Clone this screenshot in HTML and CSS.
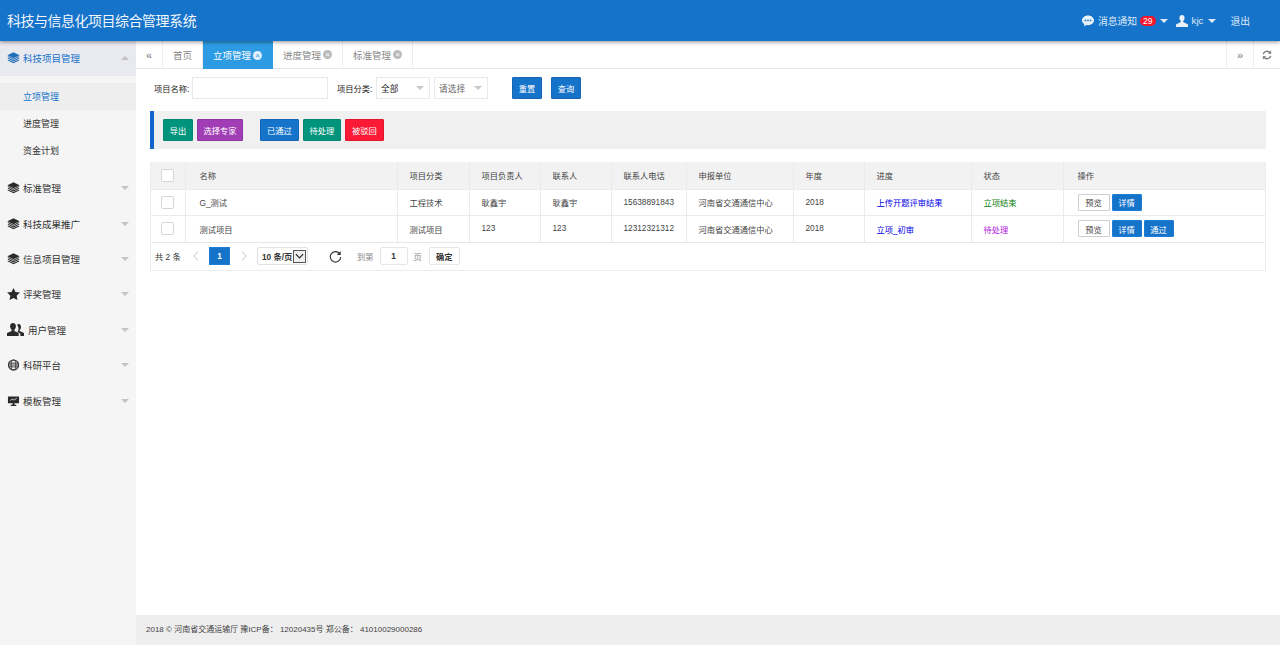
FILE: index.html
```html
<!DOCTYPE html>
<html lang="zh">
<head>
<meta charset="utf-8">
<title>科技与信息化项目综合管理系统</title>
<link rel="stylesheet" href="styles.css">
</head>
<body>
<svg class="defs" width="0" height="0" aria-hidden="true">
  <symbol id="layers" viewBox="0 0 16 14">
    <path fill="currentColor" d="M8 0l7.5 3.6L8 7.2.5 3.6z"/>
    <path fill="currentColor" d="M.5 5.600L2 4.900l6 2.900 6-2.900 1.500.7L8 9.200z"/>
    <path fill="currentColor" d="M.5 7.600L2 6.900l6 2.900 6-2.900 1.500.7L8 11.200z"/>
    <path fill="currentColor" d="M.5 9.800L2 9.100l6 2.900 6-2.900 1.500.7L8 13.400z"/>
  </symbol>
</svg>
<header class="topbar">
  <div class="brand">科技与信息化项目综合管理系统</div>
  <nav class="topnav">
    <span class="topitem">
      <svg class="ti-icon" viewBox="0 0 14 13"><path fill="#fff" fill-opacity=".9" d="M7 0c3.900 0 7 2.500 7 5.700s-3.100 5.700-7 5.700c-.7 0-1.300-.1-1.900-.2L2.200 13l.5-2.800C1 9.200 0 7.600 0 5.700 0 2.500 3.100 0 7 0z"/><circle cx="4" cy="5.800" r="1" fill="#1673ca"/><circle cx="7" cy="5.800" r="1" fill="#1673ca"/><circle cx="10" cy="5.800" r="1" fill="#1673ca"/></svg>
      消息通知<span class="badge">29</span><i class="caret"></i>
    </span>
    <span class="topitem user">
      <svg class="ti-icon" viewBox="0 0 13 13"><path fill="#fff" fill-opacity=".9" d="M6.500 0C8.300 0 9.300 1.300 9.300 3.200c0 1.500-.7 2.700-1.500 3.400v1.100L13 10.200V13H0v-2.800l5.200-2.500V6.600C4.400 5.900 3.700 4.700 3.700 3.200 3.700 1.300 4.700 0 6.500 0z"/></svg>
      kjc<i class="caret"></i>
    </span>
    <span class="topitem logout">退出</span>
  </nav>
</header>
<div class="shell">
  <aside class="sidebar">
    <div class="group open">
      <svg class="mi"><use href="#layers"/></svg><span class="mt">科技项目管理</span><i class="arrow up"></i>
    </div>
    <ul class="submenu">
      <li class="active">立项管理</li>
      <li>进度管理</li>
      <li>资金计划</li>
    </ul>
    <div class="group"><svg class="mi"><use href="#layers"/></svg><span class="mt">标准管理</span><i class="arrow"></i></div>
    <div class="group"><svg class="mi"><use href="#layers"/></svg><span class="mt">科技成果推广</span><i class="arrow"></i></div>
    <div class="group"><svg class="mi"><use href="#layers"/></svg><span class="mt">信息项目管理</span><i class="arrow"></i></div>
    <div class="group"><svg class="mi" viewBox="0 0 14 13"><path fill="currentColor" d="M7 0l2.100 4.300 4.800.7-3.500 3.300.9 4.700L7 10.800 2.700 13l.9-4.700L.1 5l4.800-.7z"/></svg><span class="mt">评奖管理</span><i class="arrow"></i></div>
    <div class="group"><svg class="mi wide" viewBox="0 0 17 13"><path fill="currentColor" d="M11.500 1c1.600 0 2.500 1.200 2.500 2.900 0 1.300-.6 2.400-1.300 3v1l4.300 2V13h-3.700v-2.500l-2.900-1.600c.6-.7 1.100-1.500 1.100-2.900 0-1.600-.4-3.100-1.500-4C10.500 1.400 11 1 11.500 1z"/><path fill="currentColor" d="M6 0c1.900 0 2.900 1.400 2.900 3.300 0 1.500-.7 2.800-1.500 3.500v1.100l4.300 2.200V13H0v-2.900l4.600-2.200V6.800C3.800 6.100 3.100 4.800 3.100 3.300 3.100 1.400 4.100 0 6 0z"/></svg><span class="mt">用户管理</span><i class="arrow"></i></div>
    <div class="group"><svg class="mi" viewBox="0 0 14 14"><circle cx="7" cy="7" r="5.900" fill="none" stroke="currentColor" stroke-width="1.300"/><ellipse cx="7" cy="7" rx="2.800" ry="5.900" fill="none" stroke="currentColor"/><path stroke="currentColor" d="M1.500 4.800h11M1.100 7h11.800M1.500 9.200h11"/></svg><span class="mt">科研平台</span><i class="arrow"></i></div>
    <div class="group"><svg class="mi" viewBox="0 0 14 13"><path fill="currentColor" d="M1 1.500h12v7.500H8v1.500h2V12H4v-1.500h2V9H1z"/><path fill="none" stroke="#f5f5f5" stroke-width=".8" d="M3.500 6l2-1.500 2 1 3-2"/></svg><span class="mt">模板管理</span><i class="arrow"></i></div>
  </aside>
  <main class="main">
    <div class="tabs">
      <span class="tab-btn">«</span>
      <div class="tablist">
        <span class="tab home">首页</span>
        <span class="tab current">立项管理<i class="close">×</i></span>
        <span class="tab">进度管理<i class="close">×</i></span>
        <span class="tab">标准管理<i class="close">×</i></span>
      </div>
      <span class="tab-btn left-line">»</span>
      <span class="tab-btn left-line refresh">
        <svg viewBox="0 0 12 12" width="10" height="10"><path fill="none" stroke="#777" stroke-width="1.600" d="M1.500 5a4.600 4.600 0 0 1 8.200-1.500M10.500 7a4.600 4.600 0 0 1-8.200 1.500"/><path fill="#777" d="M11 .6v4H7zM1 11.400v-4h4z"/></svg>
      </span>
    </div>
    <div class="content">
      <form class="search">
        <label class="lab">项目名称:</label>
        <span class="input name"></span>
        <label class="lab cat">项目分类:</label>
        <span class="select first">全部<i class="arrow"></i></span>
        <span class="select second">请选择<i class="arrow"></i></span>
        <button class="btn blue reset" type="button">重置</button>
        <button class="btn blue query" type="button">查询</button>
      </form>
      <div class="toolbar">
        <button class="btn teal" type="button">导出</button>
        <button class="btn purple" type="button">选择专家</button>
        <button class="btn blue spaced" type="button">已通过</button>
        <button class="btn teal" type="button">待处理</button>
        <button class="btn red" type="button">被驳回</button>
      </div>
      <div class="tablebox">
        <table class="grid">
          <colgroup>
            <col class="c0"><col class="c1"><col class="c2"><col class="c3"><col class="c4"><col class="c5"><col class="c6"><col class="c7"><col class="c8"><col class="c9"><col class="c10">
          </colgroup>
          <thead>
            <tr><th><i class="check"></i></th><th>名称</th><th>项目分类</th><th>项目负责人</th><th>联系人</th><th>联系人电话</th><th>申报单位</th><th>年度</th><th>进度</th><th>状态</th><th>操作</th></tr>
          </thead>
          <tbody>
            <tr><td><i class="check"></i></td><td>G_测试</td><td>工程技术</td><td>耿鑫宇</td><td>耿鑫宇</td><td>15638891843</td><td>河南省交通通信中心</td><td>2018</td><td class="prog">上传开题评审结果</td><td class="st-green">立项结束</td><td class="ops"><button class="mini ghost" type="button">预览</button><button class="mini fill" type="button">详情</button></td></tr>
            <tr><td><i class="check"></i></td><td>测试项目</td><td>测试项目</td><td>123</td><td>123</td><td>12312321312</td><td>河南省交通通信中心</td><td>2018</td><td class="prog">立项_初审</td><td class="st-purple">待处理</td><td class="ops"><button class="mini ghost" type="button">预览</button><button class="mini fill" type="button">详情</button><button class="mini fill" type="button">通过</button></td></tr>
          </tbody>
        </table>
        <div class="pager">
          <span class="total">共 2 条</span>
          <svg class="pg-arrow" viewBox="0 0 6 10"><path fill="none" stroke="#c8c8c8" d="M5 .5L.8 5 5 9.500"/></svg>
          <span class="pg-cur">1</span>
          <svg class="pg-arrow" viewBox="0 0 6 10"><path fill="none" stroke="#c8c8c8" d="M1 .5L5.200 5 1 9.500"/></svg>
          <span class="pg-size">10 条/页<i class="pg-drop"><svg viewBox="0 0 10 6" width="9" height="6"><path fill="none" stroke="#222" stroke-width="1.300" d="M1 1l4 4 4-4"/></svg></i></span>
          <svg class="pg-reload" viewBox="0 0 14 14"><path fill="none" stroke="#333" stroke-width="1.200" d="M11.800 4.500A5.600 5.600 0 1 0 12.600 7.500"/><path fill="#333" d="M12.600 1v4.300H8.400z"/></svg>
          <span class="pg-text">到第</span>
          <span class="pg-input">1</span>
          <span class="pg-text">页</span>
          <span class="pg-ok">确定</span>
        </div>
      </div>
    </div>
    <footer class="foot">2018 © 河南省交通运输厅 豫ICP备： 12020435号 郑公备： 41010029000286</footer>
  </main>
</div>
</body>
</html>
```
FILE: styles.css
```css
* { box-sizing: border-box; }
html, body { margin: 0; height: 100%; overflow: hidden; }
body {
  font-family: "Liberation Sans", "Noto Sans CJK SC", sans-serif;
  font-size: 8.250px;
  color: #333;
  background: #fff;
  display: flex;
  flex-direction: column;
}
.defs { position: absolute; }
.topbar {
  height: 41px;
  flex: none;
  background: #1673ca;
  color: #fff;
  display: flex;
  align-items: center;
  justify-content: space-between;
  padding: 0 30px 0 7px;
  box-shadow: 0 1px 4px rgba(0, 0, 0, .45);
  position: relative;
  z-index: 2;
}
.brand { font-size: 14px; letter-spacing: -.035em; padding-bottom: 1px; color: #f2f7fc; }
.topnav { display: flex; align-items: center; color: #dfeaf6; font-size: 9.750px; }
.topitem { display: flex; align-items: center; }
.ti-icon { width: 12px; height: 12px; margin-right: 4px; }
.badge {
  background: #f6152b;
  color: #fff;
  font-size: 8.500px;
  border-radius: 7px;
  padding: 0 3px;
  line-height: 10px;
  margin-left: 3px;
}
.caret {
  width: 0; height: 0;
  border: 4px solid transparent;
  border-top: 4px solid #dfeaf6;
  border-bottom: 0;
  margin-left: 4px;
}
.user { margin-left: 8px; }
.logout { margin-left: 15px; }
.shell { flex: 1; display: flex; min-height: 0; }
.sidebar { width: 136px; flex: none; background: #f5f5f5; color: #333; }
.group {
  height: 35.400px;
  display: flex;
  align-items: center;
  padding-left: 7px;
  font-size: 9.500px;
  position: relative;
}
.group.open { height: 35px; background: #e9e9f0; color: #1673ca; margin-bottom: 7px; padding-bottom: 2px; }
.group .mt { margin-left: 3px; }
.mi { width: 13px; height: 12px; color: #2a2a2a; flex: none; }
.open .mi { color: #1f6eb8; }
.mi.wide { width: 17px; height: 13px; margin-right: 1px; }
.arrow {
  width: 0; height: 0;
  border: 4.500px solid transparent;
  border-top: 4px solid #c4c4c4;
  border-bottom: 0;
  margin-left: auto;
  margin-right: 7px;
  flex: none;
}
.arrow.up { border-top: 0; border-bottom: 4px solid #c4c4c4; }
.submenu { list-style: none; margin: 0 0 6.600px; padding: 0; font-size: 9px; }
.submenu li { height: 27px; line-height: 28px; padding-left: 23px; color: #333; }
.submenu li.active { background: #eeeeee; color: #1673ca; }
.main { flex: 1; min-width: 0; display: flex; flex-direction: column; }
.tabs {
  height: 28px;
  flex: none;
  display: flex;
  border-bottom: 1px solid #e7e7e7;
  color: #777;
}
.tab-btn { width: 27px; display: flex; align-items: center; justify-content: center; font-size: 11px; color: #777; border-right: 1px solid #eee; }
.left-line { border-right: 0; border-left: 1px solid #eee; }
.refresh { width: 27px; }
.tablist { flex: 1; display: flex; }
.tab {
  display: flex;
  align-items: center;
  padding: 0 9px 0 10px;
  font-size: 9.500px;
  color: #888;
  border-right: 1px solid #eee;
  height: 27px;
  width: 70px;
}
.tab.home { width: 40px; justify-content: center; padding: 0; }
.tab.current { background: #2d9be3; color: #fff; height: 28px; border-right: 0; }
.close {
  width: 9px; height: 9px;
  border-radius: 50%;
  background: #bbb;
  color: #fff;
  font-style: normal;
  font-size: 8px;
  line-height: 9px;
  text-align: center;
  margin-left: 2px;
  flex: none;
}
.current .close { background: #e2f0fb; color: #2d9be3; }
.content { flex: 1; min-height: 0; padding: 8px 14px 0; }
.search { display: flex; align-items: center; height: 22px; padding-left: 4px; color: #222; }
.lab { margin-right: 4px; width: 34px; white-space: nowrap; }
.cat { margin-left: 9px; margin-right: 5px; }
.input, .select {
  height: 22px;
  border: 1px solid #eaeaea;
  background: #fff;
  display: flex;
  align-items: center;
}
.name { width: 136px; }
.select { padding-left: 4px; width: 54px; font-size: 8.700px; }
.select .arrow { margin-right: 5px; border-top-color: #c8c8c8; }
.first { color: #222; }
.second { margin-left: 4px; color: #666; }
.btn {
  font: inherit;
  height: 22px;
  padding: 0;
  color: #fff;
  border: 1px solid;
  border-radius: 1px;
  display: block;
}
.blue { background: #1673ca; border-color: #1565b5; }
.teal { background: #00947c; border-color: #068570; }
.purple { background: #a13db5; border-color: #8f32a4; }
.red { background: #fb1a36; border-color: #e4142e; }
.search .btn { width: 30px; height: 22px; }
.reset { margin-left: 24px; }
.query { margin-left: 9px; }
.toolbar {
  margin-top: 12px;
  height: 38px;
  background: #f0f0f0;
  border-left: 4px solid #1265cc;
  display: flex;
  align-items: center;
  gap: 4px;
  padding-left: 9px;
}
.toolbar .purple { width: 46px; }
.toolbar .blue, .toolbar .teal, .toolbar .red { width: 38.500px; }
.toolbar .teal:first-child { width: 30px; }
.toolbar .spaced { margin-left: 13px; }
.tablebox { margin-top: 13px; border: 1px solid #ececec; border-top: 0; }
.grid { width: 100%; border-collapse: collapse; table-layout: fixed; }
.grid th, .grid td { border: 1px solid #ebebeb; padding: 0 12px; text-align: left; font-weight: 400; white-space: nowrap; overflow: hidden; }
.grid th:first-child, .grid td:first-child { border-left: 0; padding: 0; text-align: center; }
.grid th:last-child, .grid td:last-child { border-right: 0; padding-left: 14px; }
.grid tr > :nth-child(2) { padding-left: 14px; }
.grid th { background: #f2f2f2; height: 27px; color: #444; border-top: 0; }
.grid td { height: 26.500px; color: #444; }
.grid tbody tr:last-child td { border-bottom: 1px solid #e6e6e6; }
.c0 { width: 34px; } .c1 { width: 212px; } .c2 { width: 72px; } .c3 { width: 71px; } .c4 { width: 71px; }
.c5 { width: 75px; } .c6 { width: 107px; } .c7 { width: 71px; } .c8 { width: 107px; } .c9 { width: 92px; }
.check { display: inline-block; width: 13px; height: 13px; border: 1px solid #d6d6d6; border-radius: 2px; background: #fff; vertical-align: middle; }
.prog { color: #0000e6 !important; }
.st-green { color: #0a7a0a !important; }
.st-purple { color: #b516e0 !important; }
.mini { font: inherit; height: 17px; width: 30px; padding: 0; border-radius: 1px; margin-right: 2px; vertical-align: middle; border: 1px solid; }
.ghost { background: #fff; border-color: #cfcfcf; color: #444; width: 32px; }
.fill { background: #1673ca; border-color: #1c7ed6; color: #fff; }
.pager { height: 27px; display: flex; align-items: center; padding-left: 4px; color: #333; }
.total { width: 37px; white-space: nowrap; }
.pg-arrow { width: 6px; height: 10px; margin-left: 1px; }
.pg-cur { width: 21px; height: 18px; margin: 0 10px 0 10px; background: #1673ca; border: 1px solid #1c7ed6; color: #fff; font-weight: 700; display: flex; align-items: center; justify-content: center; }
.pg-size { margin-left: 10px; width: 51px; height: 18px; border: 1px solid #e2e2e2; border-radius: 2px; display: flex; align-items: center; padding-left: 4px; font-weight: 700; color: #333; white-space: nowrap; }
.pg-drop { width: 13px; height: 13px; border: 1px solid #555; background: #eee; margin-left: 1px; display: flex; align-items: center; justify-content: center; }
.pg-reload { width: 13px; height: 13px; margin-left: 21px; margin-right: 15px; }
.pg-text { color: #888; }
.pg-input { width: 28px; height: 18px; margin: 0 6px; border: 1px solid #e6e6e6; border-radius: 2px; display: flex; align-items: center; justify-content: center; font-weight: 700; color: #333; }
.pg-ok { width: 31px; height: 18px; margin-left: 7px; border: 1px solid #e6e6e6; border-radius: 2px; display: flex; align-items: center; justify-content: center; font-weight: 700; color: #333; }
.foot { height: 30px; flex: none; background: #eeeeee; padding-left: 10px; line-height: 30px; color: #444; font-size: 8px; }
```
